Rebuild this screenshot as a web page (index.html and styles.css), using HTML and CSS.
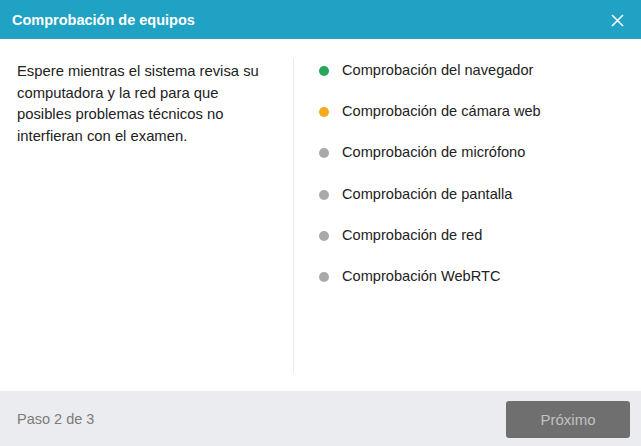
FILE: index.html
```html
<!DOCTYPE html>
<html lang="es">
<head>
<meta charset="utf-8">
<title>Comprobación de equipos</title>
<link rel="stylesheet" href="styles.css">
</head>
<body>
<div class="dialog">
  <header class="head">
    <h1 class="title">Comprobación de equipos</h1>
    <button class="close" aria-label="Cerrar">
      <svg width="13" height="13" viewBox="0 0 13 13"><path d="M1 1L12 12M12 1L1 12" stroke="#fff" stroke-width="1.6" fill="none"/></svg>
    </button>
  </header>
  <main class="body">
    <div class="intro">Espere mientras el sistema revisa su computadora y la red para que posibles problemas técnicos no interfieran con el examen.</div>
    <div class="divider"></div>
    <ul class="checks">
      <li class="check"><span class="dot ok"></span>Comprobación del navegador</li>
      <li class="check"><span class="dot busy"></span>Comprobación de cámara web</li>
      <li class="check"><span class="dot"></span>Comprobación de micrófono</li>
      <li class="check"><span class="dot"></span>Comprobación de pantalla</li>
      <li class="check"><span class="dot"></span>Comprobación de red</li>
      <li class="check"><span class="dot"></span>Comprobación WebRTC</li>
    </ul>
  </main>
  <footer class="foot">
    <span class="step">Paso 2 de 3</span>
    <button class="next">Próximo</button>
  </footer>
</div>
</body>
</html>
```

FILE: styles.css
```css
html, body {
  margin: 0;
  padding: 0;
  background: #fff;
}
body {
  font-family: "Liberation Sans", Arial, sans-serif;
  color: #222;
  width: 641px;
  height: 446px;
  overflow: hidden;
}
.dialog {
  display: flex;
  flex-direction: column;
  height: 446px;
}
.head {
  height: 39px;
  background: #20a2c5;
  display: flex;
  align-items: center;
  justify-content: space-between;
  padding: 0 17px 0 12px;
  flex-shrink: 0;
}
.title {
  margin: 0;
  font-size: 14.5px;
  font-weight: bold;
  color: #fff;
  margin-top: 1px;
}
.close {
  background: none;
  border: 0;
  padding: 0;
  margin-top: 1px;
  display: flex;
  cursor: pointer;
}
.body {
  flex: 1;
  display: flex;
  padding: 19px 0 18px 17px;
}
.intro {
  width: 250px;
  margin-right: 22px;
  font-size: 14.8px;
  line-height: 21.7px;
  padding-top: 3px;
}
.divider {
  width: 1px;
  background: #ececec;
  margin-left: 4px;
}
.checks {
  list-style: none;
  margin: 0;
  padding: 2px 0 0 25px;
  display: flex;
  flex-direction: column;
  gap: 20.2px;
}
.check {
  display: flex;
  align-items: center;
  font-size: 14.6px;
  line-height: 21px;
}
.dot {
  width: 10px;
  height: 10px;
  border-radius: 50%;
  background: #a9a9a9;
  margin-right: 13px;
  margin-top: 1px;
}
.dot.ok { background: #28a65a; }
.dot.busy { background: #f6a821; }
.foot {
  height: 55px;
  flex-shrink: 0;
  background: #ebecf0;
  display: flex;
  align-items: center;
  justify-content: space-between;
  padding: 0 11px 0 17px;
}
.step {
  font-size: 14.5px;
  color: #7b7b7b;
}
.next {
  width: 124px;
  height: 37px;
  border: 0;
  border-radius: 3px;
  background: #6f6f6f;
  color: #c2c2c2;
  font-family: "Liberation Sans", Arial, sans-serif;
  font-size: 15px;
  margin-top: 1px;
}
```
